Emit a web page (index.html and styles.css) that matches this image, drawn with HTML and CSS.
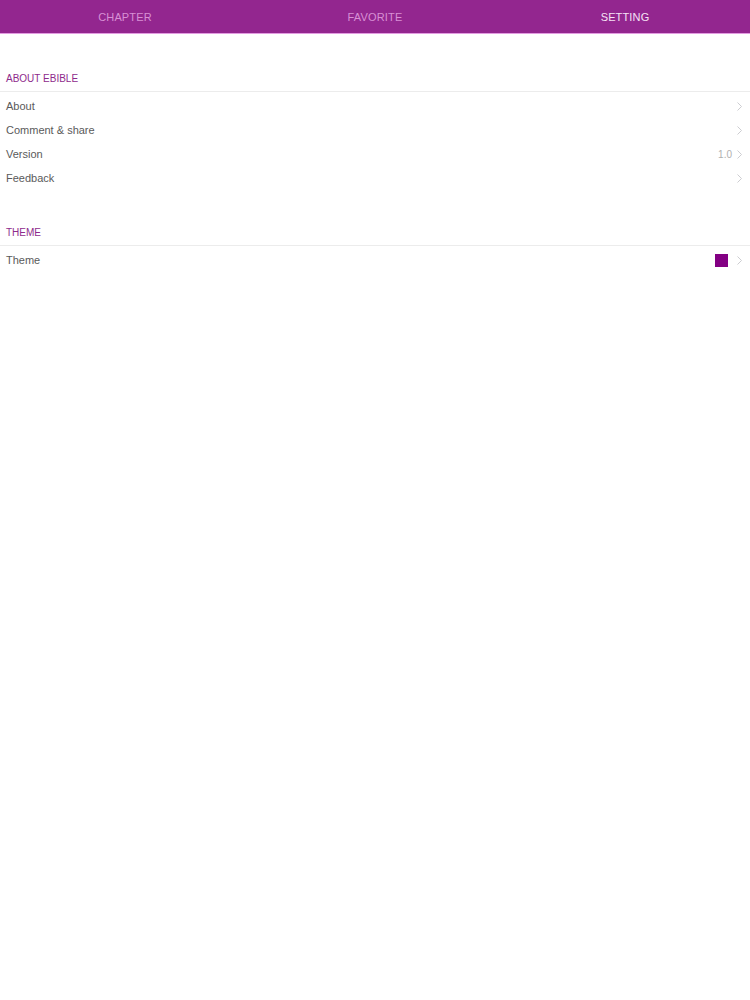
FILE: index.html
```html
<!DOCTYPE html>
<html>
<head>
<meta charset="utf-8">
<link rel="stylesheet" href="styles.css">
</head>
<body>
<div class="tabbar">
  <div class="tab">CHAPTER</div>
  <div class="tab">FAVORITE</div>
  <div class="tab active">SETTING</div>
</div>
<div class="section first">
  <div class="section-header">ABOUT EBIBLE</div>
  <div class="rows">
    <div class="row"><span class="label">About</span><span class="right"><svg class="chev" width="5" height="9" viewBox="0 0 5 9"><polyline points="0.5,0.5 4.5,4.5 0.5,8.5"/></svg></span></div>
    <div class="row"><span class="label">Comment &amp; share</span><span class="right"><svg class="chev" width="5" height="9" viewBox="0 0 5 9"><polyline points="0.5,0.5 4.5,4.5 0.5,8.5"/></svg></span></div>
    <div class="row"><span class="label">Version</span><span class="right"><span class="value">1.0</span><svg class="chev" width="5" height="9" viewBox="0 0 5 9"><polyline points="0.5,0.5 4.5,4.5 0.5,8.5"/></svg></span></div>
    <div class="row"><span class="label">Feedback</span><span class="right"><svg class="chev" width="5" height="9" viewBox="0 0 5 9"><polyline points="0.5,0.5 4.5,4.5 0.5,8.5"/></svg></span></div>
  </div>
</div>
<div class="section">
  <div class="section-header">THEME</div>
  <div class="rows">
    <div class="row"><span class="label">Theme</span><span class="right"><span class="swatch"></span><svg class="chev" width="5" height="9" viewBox="0 0 5 9"><polyline points="0.5,0.5 4.5,4.5 0.5,8.5"/></svg></span></div>
  </div>
</div>
</body>
</html>
```

FILE: styles.css
```css
html, body {
  margin: 0;
  padding: 0;
  background: #ffffff;
  font-family: "Liberation Sans", Arial, sans-serif;
}
.tabbar {
  display: grid;
  grid-template-columns: 1fr 1fr 1fr;
  height: 33px;
  background: #93268f;
  border-bottom: 1px solid #e39be2;
}
.tab {
  display: flex;
  align-items: center;
  justify-content: center;
  font-size: 11px;
  color: #d88fd5;
  letter-spacing: 0.15px;
}
.tab.active {
  color: #f6e2f5;
}
.section.first {
  margin-top: 2px;
}
.section-header {
  padding: 37px 6px 6px;
  font-size: 10px;
  line-height: 12px;
  color: #8e2a8b;
  border-bottom: 1px solid #ececec;
}
.rows {
  padding-top: 2px;
}
.row {
  display: flex;
  align-items: center;
  justify-content: space-between;
  height: 24px;
  padding: 0 8px 0 6px;
  font-size: 11px;
  color: #5a5a5a;
}
.right {
  display: flex;
  align-items: center;
  gap: 5px;
}
.value {
  color: #b0b0b0;
  font-size: 10px;
}
.swatch {
  width: 13px;
  height: 13px;
  background: #830083;
  margin-right: 4px;
}
.chev {
  display: block;
}
.chev polyline {
  fill: none;
  stroke: #cdcdd1;
  stroke-width: 1;
}
```
